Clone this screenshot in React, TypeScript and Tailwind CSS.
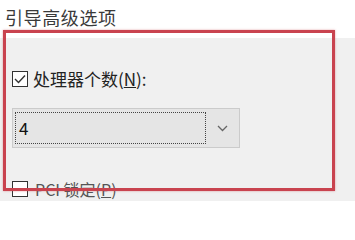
import React from "react";

const Check = ({ checked }: { checked?: boolean }) => (
  <span className="w-[16px] h-[16px] border border-[#333] bg-white flex items-center justify-center shrink-0">
    {checked && (
      <svg width="12" height="10" viewBox="0 0 12 10" fill="none">
        <path d="M1 5 L4.5 8.5 L11 1.5" stroke="#333" strokeWidth="1.4" />
      </svg>
    )}
  </span>
);

export default function App() {
  return (
    <div
      className="w-[355px] h-[201px] relative overflow-hidden bg-white flex flex-col"
      style={{ fontFamily: '"Noto Sans CJK SC", "Noto Sans", sans-serif' }}
    >
      {/* group title */}
      <div className="h-[42px] pl-[5px] pt-[6px] text-[18px] leading-[22px] text-[#3a3a3a] tracking-[0.6px]">
        引导高级选项
      </div>

      <div className="flex-1 bg-[#f0f0f0] pl-[12px] pt-[32px] flex flex-col">
        <label className="flex items-center gap-[5px] h-[17px] text-[17px] text-[#222]">
          <Check checked />
          <span className="leading-[17px]">
            处理器个数(<span className="underline">N</span>):
          </span>
        </label>

        {/* select */}
        <div className="mt-[21px] w-[228px] h-[40px] border border-[#cbcbcb] bg-[#e5e5e5] flex items-center">
          <div className="ml-[2px] w-[191px] h-[32px] border border-dotted border-[#444] flex items-center pl-[3px] text-[17px] text-[#111]">
            4
          </div>
          <div className="flex-1 flex justify-center">
            <svg width="11" height="7" viewBox="0 0 11 7" fill="none">
              <path d="M1 1 L5.5 5.5 L10 1" stroke="#666" strokeWidth="1.3" />
            </svg>
          </div>
        </div>

        <label className="mt-[29px] flex items-center gap-[7px] text-[16px] text-[#555]">
          <Check />
          <span>
            PCI 锁定(<span className="underline">P</span>)
          </span>
        </label>
      </div>

      {/* red highlight box drawn over the screenshot */}
      <div className="absolute left-[3px] top-[30px] w-[332px] h-[161px] border-[3px] border-[#c9434f] shadow-[0_0_2px_rgba(201,67,79,0.5)]" />
    </div>
  );
}
